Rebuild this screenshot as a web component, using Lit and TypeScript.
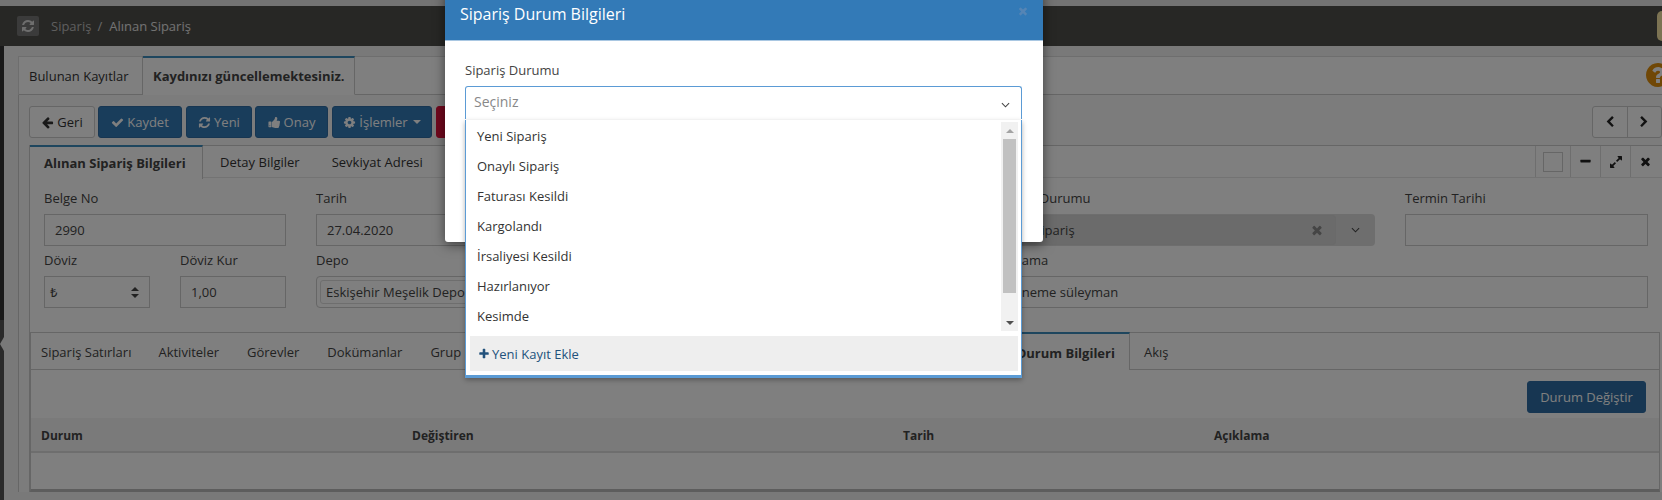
import { LitElement, html, css, svg } from "lit";
import { customElement } from "lit/decorators.js";

const P: Record<string, string> = {
  check: "M1671 566q0 40-28 68l-724 724-136 136q-28 28-68 28t-68-28l-136-136-362-362q-28-28-28-68t28-68l136-136q28-28 68-28t68 28l294 295 656-657q28-28 68-28t68 28l136 136q28 28 28 68z",
  times: "M1490 1322q0 40-28 68l-136 136q-28 28-68 28t-68-28l-294-294-294 294q-28 28-68 28t-68-28l-136-136q-28-28-28-68t28-68l294-294-294-294q-28-28-28-68t28-68l136-136q28-28 68-28t68 28l294 294 294-294q28-28 68-28t68 28l136 136q28 28 28 68t-28 68l-294 294 294 294q28 28 28 68z",
  plus: "M1600 736v192q0 40-28 68t-68 28h-416v416q0 40-28 68t-68 28h-192q-40 0-68-28t-28-68v-416h-416q-40 0-68-28t-28-68v-192q0-40 28-68t68-28h416v-416q0-40 28-68t68-28h192q40 0 68 28t28 68v416h416q40 0 68 28t28 68z",
  minus: "M1600 736v192q0 40-28 68t-68 28h-1216q-40 0-68-28t-28-68v-192q0-40 28-68t68-28h1216q40 0 68 28t28 68z",
  left: "M1664 896v128q0 53-32.5 90.5t-84.5 37.5h-704l293 294q38 36 38 90t-38 90l-75 76q-37 37-90 37-52 0-91-37l-651-652q-37-37-37-90 0-52 37-91l651-650q38-38 91-38 52 0 90 38l75 74q38 38 38 91t-38 91l-293 293h704q52 0 84.5 37.5t32.5 90.5z",
  chevL: "M1427 301l-531 531 531 531q19 19 19 45t-19 45l-166 166q-19 19-45 19t-45-19l-742-742q-19-19-19-45t19-45l742-742q19-19 45-19t45 19l166 166q19 19 19 45t-19 45z",
  chevR: "M1363 877l-742 742q-19 19-45 19t-45-19l-166-166q-19-19-19-45t19-45l531-531-531-531q-19-19-19-45t19-45l166-166q19-19 45-19t45 19l742 742q19 19 19 45t-19 45z",
  refresh: "M1639 1056q0 5-1 7-64 268-268 434.5t-478 166.5q-146 0-282.5-55t-243.5-157l-129 129q-19 19-45 19t-45-19-19-45v-448q0-26 19-45t45-19h448q26 0 45 19t19 45-19 45l-137 137q71 66 161 102t187 36q134 0 250-65t186-179q11-17 53-117 8-23 30-23h192q13 0 22.5 9.5t9.5 22.5zm25-800v448q0 26-19 45t-45 19h-448q-26 0-45-19t-19-45 19-45l138-138q-148-137-349-137-134 0-250 65t-186 179q-11 17-53 117-8 23-30 23h-199q-13 0-22.5-9.5t-9.5-22.5v-7q65-268 270-434.5t480-166.5q146 0 284 55.5t245 156.5l130-129q19-19 45-19t45 19 19 45z",
  thumb: "M320 1344q0-26-19-45t-45-19q-27 0-45.5 19t-18.5 45q0 27 18.5 45.5t45.5 18.5q26 0 45-18.5t19-45.5zm160-512v640q0 26-19 45t-45 19h-288q-26 0-45-19t-19-45v-640q0-26 19-45t45-19h288q26 0 45 19t19 45zm1184 0q0 86-55 149 15 44 15 76 3 76-43 137 17 56 0 117-15 57-54 94 9 112-49 181-64 76-197 78h-129q-66 0-144-15.5t-121.5-29-120.5-39.5q-123-43-158-44-26-1-45-19.5t-19-44.5v-641q0-25 18-43.5t43-20.5q24-2 76-59t101-121q68-87 101-120 18-18 31-48t17.5-48.5 13.5-60.5q7-39 12.5-61t19.5-52 34-50q19-19 45-19 46 0 82.5 10.5t60 26 40 40.5 24 45 12 50 5 45 .5 39q0 38-9.5 76t-19 60-27.5 56q-3 6-10 18t-11 22-8 24h277q78 0 135 57t57 135z",
  cog: "M1152 896q0-106-75-181t-181-75-181 75-75 181 75 181 181 75 181-75 75-181zm512-109v222q0 12-8 23t-20 13l-185 28q-19 54-39 91 35 50 107 138 10 12 10 25t-9 23q-27 37-99 108t-94 71q-12 0-26-9l-138-108q-44 23-91 38-16 136-29 186-7 28-36 28h-222q-14 0-24.5-8.5t-11.5-21.5l-28-184q-49-16-90-37l-141 107q-10 9-25 9-14 0-25-11-126-114-165-168-7-10-7-23 0-12 8-23 15-21 51-66.5t54-70.5q-27-50-41-99l-183-27q-13-2-21-12.5t-8-23.5v-222q0-12 8-23t19-13l186-28q14-46 39-92-40-57-107-138-10-12-10-24 0-10 9-23 26-36 98.5-107.5t94.5-71.5q13 0 26 10l138 107q44-23 91-38 16-136 29-186 7-28 36-28h222q14 0 24.5 8.5t11.5 21.5l28 184q49 16 90 37l142-107q9-9 24-9 13 0 25 10 129 119 165 170 7 8 7 22 0 12-8 23-15 21-51 66.5t-54 70.5q26 50 41 98l183 28q13 2 21 12.5t8 23.5z",
  help: "M1024 1376v-192q0-14-9-23t-23-9h-192q-14 0-23 9t-9 23v192q0 14 9 23t23 9h192q14 0 23-9t9-23zm256-672q0-88-55.5-163t-138.5-116-170-41q-243 0-371 213-15 24 8 42l132 100q7 6 19 6 16 0 25-12 53-68 86-92 34-24 86-24 48 0 85.5 26t37.5 59q0 38-20 61t-68 45q-63 28-115.5 86.5t-52.5 125.5v36q0 14 9 23t23 9h192q14 0 23-9t9-23q0-19 21.5-49.5t54.5-49.5q32-18 49-28.5t46-35 44.5-48 28-60.5 12.5-81zm384 192q0 209-103 385.5t-279.5 279.5-385.5 103-385.5-103-279.5-279.5-103-385.5 103-385.5 279.5-279.5 385.5-103 385.5 103 279.5 279.5 103 385.5z",
  expand: "M883 1056q0 13-10 23l-332 332 144 144q19 19 19 45t-19 45-45 19h-448q-26 0-45-19t-19-45v-448q0-26 19-45t45-19 45 19l144 144 332-332q10-10 23-10t23 10l114 114q10 10 10 23zm781-864v448q0 26-19 45t-45 19-45-19l-144-144-332 332q-10 10-23 10t-23-10l-114-114q-10-10-10-23t10-23l332-332-144-144q-19-19-19-45t19-45 45-19h448q26 0 45 19t19 45z",
};

const fa = (name: string, cls = "i13") =>
  html`<svg class="fa ${cls}" viewBox="0 0 1792 1792" aria-hidden="true">${svg`<path d=${P[name]}></path>`}</svg>`;

const chevDown = html`<svg class="chev" viewBox="0 0 10 6" aria-hidden="true"><path d="M1 1l4 4 4-4" fill="none" stroke="currentColor" stroke-width="1.2"></path></svg>`;

const ITEMS = ["Yeni Sipariş", "Onaylı Sipariş", "Faturası Kesildi", "Kargolandı", "İrsaliyesi Kesildi", "Hazırlanıyor", "Kesimde"];

@customElement("app-root")
export class AppRoot extends LitElement {
  static styles = css`
    :host {
      display: block;
      position: relative;
      width: 1662px;
      height: 500px;
      overflow: hidden;
      font-family: "Open Sans", "Noto Sans", sans-serif;
      font-size: 13px;
      color: #333;
      background: #f2f2f2;
    }
    * { box-sizing: border-box; }
    .fa { fill: currentColor; display: inline-block; flex: none; }
    .i13 { width: 13px; height: 13px; }
    .i12 { width: 12px; height: 12px; }
    .i14 { width: 14px; height: 14px; }
    .i16 { width: 16px; height: 16px; }
    .i28 { width: 28px; height: 28px; }
    .chev { width: 9px; height: 6px; flex: none; display: block; }

    .strip { height: 6px; background: #e6e6e6; }
    .hdr {
      height: 40px;
      background: #4f4e4a;
      display: flex;
      align-items: center;
      padding-left: 17px;
      position: relative;
    }
    .hdr .rf {
      width: 22px; height: 20px; border-radius: 2px;
      background: #777;
      color: #ddd;
      display: flex; align-items: center; justify-content: center;
      margin-right: 12px;
    }
    .crumb1 { color: #bdbdbd; }
    .sl { color: #d0d0d0; margin: 0 7px 0 6px; }
    .crumb2 { color: #e4e4e4; }
    .yellow {
      margin-left: auto;
      width: 5px; height: 30px;
      background: #f8e7a6;
      border-radius: 5px 0 0 5px;
    }

    .body { display: flex; height: 454px; }
    .side {
      width: 4px;
      background: linear-gradient(#333 0, #333 274px, #555 274px);
      position: relative;
    }
    .notch {
      position: absolute;
      left: 0; top: 291px;
      border-right: 4px solid #f2f2f2;
      border-top: 7px solid transparent;
      border-bottom: 7px solid transparent;
    }
    .main { flex: 1; padding: 10px 0 0 14px; min-width: 0; }

    .tabs1 {
      height: 39px;
      display: flex;
      border-top: 1px solid #ddd;
      border-bottom: 1px solid #ccc;
      background: #fff;
      margin-left: 1px;
      position: relative;
    }
    .tabs1 .t {
      padding: 0 10px;
      display: flex; align-items: center;
      border-right: 1px solid #ccc;
      height: 39px;
      margin-top: -1px;
      white-space: nowrap;
      flex: none;
    }
    .tabs1 .t:first-child { border-left: 1px solid #ddd; width: 125px; margin-left: -1px; }
    .tabs1 .t.on {
      width: 212px;
      border-top: 2px solid #3c8dbc;
      background: #fff;
      font-weight: 700;
      color: #444;
      height: 39px;
      padding: 0 10px;
      border-bottom: 1px solid #fff;
    }
    .help {
      position: absolute;
      left: 1625px; top: 4px;
      color: #e08e0b;
    }
    .help .fa { display: block; }

    .panel {
      height: 397px;
      border-left: 1px solid #ccc;
      padding: 11px 0 0 10px;
      background: #f9f9f9;
    }
    .tools { display: flex; height: 32px; }
    .btn {
      height: 32px;
      display: flex; align-items: center; justify-content: center; gap: 3px;
      border-radius: 3px;
      background: #337ab7;
      color: #fff;
      border: 1px solid #2e6da4;
      margin-right: 4px;
    }
    .btn.back { width: 66px; background: #fff; color: #333; border-color: #ccc; margin-right: 3px; }
    .b-k { width: 84px; }
    .b-y { width: 66px; margin-right: 3px; }
    .b-o { width: 73px; }
    .b-i { width: 100px; }
    .b-r { width: 60px; background: #e0103a; border-color: #e0103a; }
    .caret {
      width: 0; height: 0; margin-left: 2px;
      border-top: 4px solid #fff;
      border-left: 4px solid transparent;
      border-right: 4px solid transparent;
    }
    .pager {
      margin-left: auto;
      width: 70px;
      display: flex;
      border: 1px solid #ccc;
      border-radius: 3px;
      background: #fff;
    }
    .pager span { flex: 1; display: flex; align-items: center; justify-content: center; color: #222; }
    .pager span + span { border-left: 1px solid #ccc; }

    .sheet {
      margin-top: 7px;
      border-left: 1px solid #ccc;
      margin-left: 0;
      background: #fff;
      height: 347px;
    }
    .tabs2 {
      height: 33px;
      display: flex;
      align-items: stretch;
      border-top: 1px solid #ccc;
      border-bottom: 1px solid #e6e6e6;
      background: #fff;
    }
    .tabs2 .t { display: flex; align-items: center; padding: 0 16px; }
    .tabs2 .t.on {
      width: 173px;
      margin: -1px 1px 0 0;
      border-top: 2px solid #3c8dbc;
      border-right: 1px solid #ccc;
      background: #fff;
      font-weight: 700;
      color: #444;
      padding: 0 14px;
      height: 34px;
    }
    .ctrls { margin-left: auto; margin-right: 2px; display: flex; }
    .ctrls span {
      width: 30px;
      border-left: 1px solid #ddd;
      display: flex; align-items: center; justify-content: center;
      color: #222;
    }
    .ctrls .box { width: 35px; }
    .ctrls .box i { display: block; width: 20px; height: 20px; border: 1px solid #ccc; background: #fff; }

    .form { padding: 12px 14px 0 14px; height: 154px; display: flex; flex-direction: column; gap: 6px; }
    .row { display: flex; gap: 30px; }
    .f { display: flex; flex-direction: column; gap: 8px; flex: none; }
    .f label { height: 16px; line-height: 16px; color: #444; display: block; }
    .inp {
      height: 32px;
      border: 1px solid #ccc;
      background: #fff;
      display: flex; align-items: center;
      padding: 0 10px;
      color: #444;
      white-space: nowrap;
    }
    .w241 { width: 242px; }
    .w105 { width: 106px; }
    .w245 { width: 245px; }
    .w376 { width: 375px; }
    .w379 { width: 379px; }
    .w243 { width: 243px; }
    .w650 { width: 648px; }
    .w651 { width: 654px; }
    .dv { padding: 0 10px 0 5px; justify-content: space-between; }
    .updn { display: flex; flex-direction: column; gap: 3px; }
    .updn i { display: block; width: 0; height: 0; border-left: 4px solid transparent; border-right: 4px solid transparent; }
    .updn i:first-child { border-bottom: 4px solid #444; }
    .updn i:last-child { border-top: 4px solid #444; }
    .depo { padding: 3px; border-radius: 4px; }
    .depo span {
      display: flex; align-items: center;
      height: 24px; width: 100%;
      border: 1px solid #ddd; border-radius: 3px;
      padding: 0 5px;
    }
    .sel {
      height: 32px;
      background: #ddd;
      border-radius: 4px;
      display: flex;
      align-items: center;
      color: #555;
    }
    .sel .v {
      flex: 1; height: 30px; margin: 0 0 0 3px;
      border: 1px solid #d4d4d4; border-radius: 3px;
      background: #d6d6d6;
      display: flex; align-items: center; justify-content: space-between;
      padding: 0 11px 0 5px;
      color: #444;
    }
    .sel .v .fa { color: #8a8a8a; }
    .sel .c { width: 39px; display: flex; justify-content: center; color: #444; }

    .sub {
      width: 1630px;
      margin-left: 0;
      height: 160px;
      border: 1px solid #ccc;
      border-bottom: 3px solid #bbb;
      background: #fff;
    }
    .tabs3 {
      height: 37px;
      display: flex;
      align-items: center;
      border-bottom: 1px solid #ccc;
      padding: 1px 0 0 10px;
      gap: 28px;
      position: relative;
      color: #444;
    }
    .tabs3 .first { margin-right: -1px; }
    .tabs3 .on {
      margin-left: 470px;
      align-self: stretch;
      display: flex; align-items: center;
      height: 38px;
      margin-top: -2px;
      border-top: 2px solid #3c8dbc;
      border-right: 1px solid #ccc;
      background: #fff;
      font-weight: 700;
      padding: 1px 14px 0;
    }
    .tabs3 .akis { margin-left: -14px; }
    .sub-act { display: flex; justify-content: flex-end; padding: 11px 13px 5px 0; }
    .b-d { width: 119px; margin: 0; background: #2e6da4; }
    .thead {
      display: grid;
      grid-template-columns: 371px 491px 311px 1fr;
      height: 35px;
      align-items: center;
      background: #f4f4f4;
      border-bottom: 2px solid #ddd;
      padding: 1px 0 0 10px;
      font-weight: 700;
      font-size: 12px;
      color: #444;
    }

    .backdrop {
      position: absolute; inset: 0;
      background: rgba(0, 0, 0, 0.5);
    }
    .modal {
      position: absolute;
      left: 445px; top: -10px;
      width: 598px;
      height: 252px;
      background: #fff;
      border-radius: 0 0 3px 3px;
      box-shadow: 0 3px 12px rgba(0, 0, 0, 0.5);
    }
    .mh {
      height: 51px;
      background: #337ab7;
      color: #fff;
      padding: 13px 14px 0 15px;
      display: flex;
      align-items: flex-start;
      justify-content: space-between;
      border-bottom: 1px solid #a9c7e2;
    }
    .mt { font-size: 16px; line-height: 22px; font-weight: 400; }
    .close { color: #5585b5; margin-top: 0; margin-right: 0; }
    .mb { padding: 21px 21px 0 20px; }
    .mb label { display: block; height: 16px; line-height: 16px; margin-bottom: 8px; color: #444; }
    .combo {
      position: relative;
      height: 33px;
      border: 1px solid #5b9bd5;
      border-bottom: none;
      border-radius: 3px 3px 0 0;
      display: flex; align-items: center; justify-content: space-between;
      padding: 0 11px 4px 8px;
      font-size: 14px;
      color: #888;
      background: #fff;
    }
    .combo .chev { color: #444; margin-top: 7px; }
    .menu {
      position: absolute;
      left: -1px; right: -1px; top: 33px;
      height: 258px;
      border: 1px solid #5b9bd5;
      border-top: none;
      border-bottom: 3px solid #5b9bd5;
      background: #fff;
      padding: 2px 3px 4px 4px;
      box-shadow: 0 2px 5px rgba(0, 0, 0, 0.3);
      display: flex; flex-direction: column; gap: 5px;
      color: #333;
      font-size: 13px;
    }
    .listwrap { display: flex; height: 210px; }
    .list { flex: 1; margin-top: -1px; }
    .list div { height: 30px; line-height: 30px; padding-left: 7px; }
    .sb {
      width: 17px;
      background: #f1f1f1;
      display: flex; flex-direction: column; align-items: center;
    }
    .sb .a { height: 17px; flex: none; display: flex; align-items: center; justify-content: center; }
    .sb .a i { display: block; width: 0; height: 0; border-left: 4px solid transparent; border-right: 4px solid transparent; }
    .sb .up i { border-bottom: 4px solid #a3a3a3; }
    .sb .dn i { border-top: 4px solid #505050; }
    .sb .th { width: 13px; height: 154px; background: #c1c1c1; flex: none; }
    .sb .sp { flex: 1; }
    .add {
      height: 35px;
      background: #eee;
      display: flex; align-items: center; gap: 2px;
      padding-left: 8px;
      color: #23527c;
    }
  `;

  render() {
    return html`
      <div class="strip"></div>
      <div class="hdr">
        <span class="rf">${fa("refresh", "i14")}</span>
        <span class="crumb1">Sipariş</span><span class="sl">/</span><span class="crumb2">Alınan Sipariş</span>
        <span class="yellow"></span>
      </div>
      <div class="body">
        <div class="side"><i class="notch"></i></div>
        <div class="main">
          <div class="tabs1">
            <div class="t">Bulunan Kayıtlar</div>
            <div class="t on">Kaydınızı güncellemektesiniz.</div>
            <span class="help">${fa("help", "i28")}</span>
          </div>
          <div class="panel">
            <div class="tools">
              <div class="btn back">${fa("left")}Geri</div>
              <div class="btn b-k">${fa("check")}Kaydet</div>
              <div class="btn b-y">${fa("refresh")}Yeni</div>
              <div class="btn b-o">${fa("thumb")}Onay</div>
              <div class="btn b-i">${fa("cog")}İşlemler<i class="caret"></i></div>
              <div class="btn b-r">Sil</div>
              <div class="pager"><span>${fa("chevL", "i12")}</span><span>${fa("chevR", "i12")}</span></div>
            </div>
            <div class="sheet">
              <div class="tabs2">
                <div class="t on">Alınan Sipariş Bilgileri</div>
                <div class="t">Detay Bilgiler</div>
                <div class="t">Sevkiyat Adresi</div>
                <div class="ctrls">
                  <span class="box"><i></i></span>
                  <span>${fa("minus", "i13")}</span>
                  <span>${fa("expand", "i14")}</span>
                  <span>${fa("times", "i13")}</span>
                </div>
              </div>
              <div class="form">
                <div class="row">
                  <div class="f w241"><label>Belge No</label><div class="inp">2990</div></div>
                  <div class="f w245"><label>Tarih</label><div class="inp">27.04.2020</div></div>
                  <div class="f w376"><label>Müşteri</label><div class="inp"></div></div>
                  <div class="f w379">
                    <label>Sipariş Durumu</label>
                    <div class="sel"><div class="v"><span>Yeni Sipariş</span>${fa("times", "i14")}</div><div class="c">${chevDown}</div></div>
                  </div>
                  <div class="f w243"><label>Termin Tarihi</label><div class="inp"></div></div>
                </div>
                <div class="row">
                  <div class="f w105"><label>Döviz</label><div class="inp dv"><span>₺</span><span class="updn"><i></i><i></i></span></div></div>
                  <div class="f w105"><label>Döviz Kur</label><div class="inp">1,00</div></div>
                  <div class="f w650"><label>Depo</label><div class="inp depo"><span>Eskişehir Meşelik Depo</span></div></div>
                  <div class="f w651"><label>Açıklama</label><div class="inp">Deneme süleyman</div></div>
                </div>
              </div>
              <div class="sub">
                <div class="tabs3">
                  <span class="first">Sipariş Satırları</span>
                  <span>Aktiviteler</span>
                  <span>Görevler</span>
                  <span>Dokümanlar</span>
                  <span>Grup İzinleri</span>
                  <span class="on">Durum Bilgileri</span>
                  <span class="akis">Akış</span>
                </div>
                <div class="sub-act"><div class="btn b-d">Durum Değiştir</div></div>
                <div class="thead"><span>Durum</span><span>Değiştiren</span><span>Tarih</span><span>Açıklama</span></div>
              </div>
            </div>
          </div>
        </div>
      </div>
      <div class="backdrop"></div>
      <div class="modal">
        <div class="mh">
          <span class="mt">Sipariş Durum Bilgileri</span>
          <span class="close">${fa("times", "i12")}</span>
        </div>
        <div class="mb">
          <label>Sipariş Durumu</label>
          <div class="combo">
            <span>Seçiniz</span>${chevDown}
            <div class="menu">
              <div class="listwrap">
                <div class="list">${ITEMS.map((t) => html`<div>${t}</div>`)}</div>
                <div class="sb">
                  <span class="a up"><i></i></span>
                  <span class="th"></span>
                  <span class="sp"></span>
                  <span class="a dn"><i></i></span>
                </div>
              </div>
              <div class="add">${fa("plus", "i12")}Yeni Kayıt Ekle</div>
            </div>
          </div>
        </div>
      </div>
    `;
  }
}
